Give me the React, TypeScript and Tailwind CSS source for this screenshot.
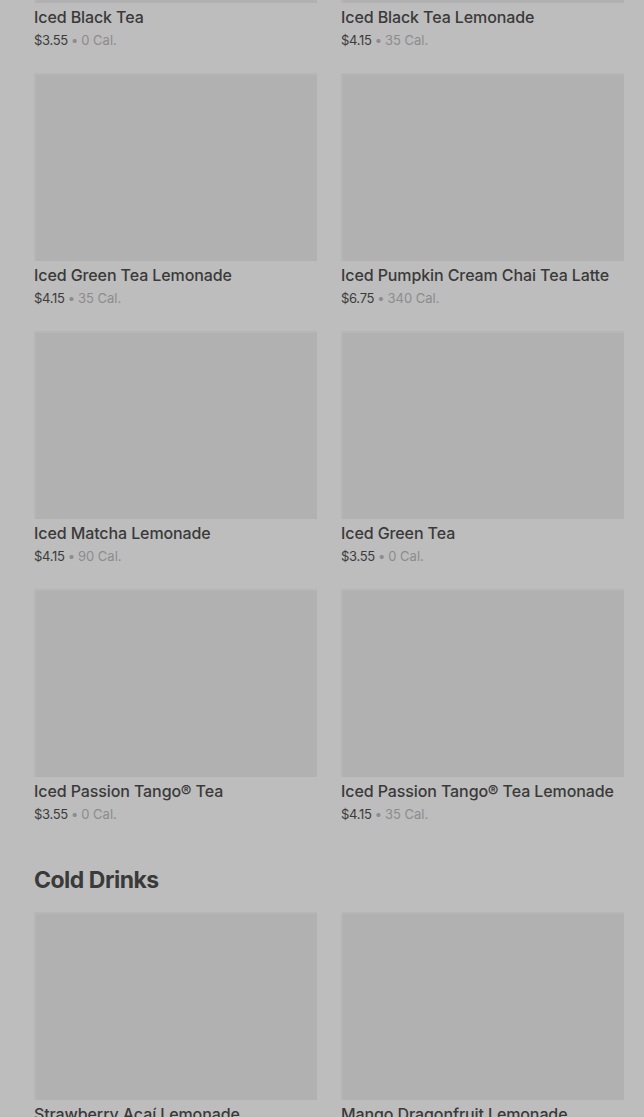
import React from 'react';

interface Drink {
    name: string;
    price: string;
    cal: string;
}

const icedTeas: Drink[] = [
    { name: 'Iced Black Tea', price: '$3.55', cal: '0 Cal.' },
    { name: 'Iced Black Tea Lemonade', price: '$4.15', cal: '35 Cal.' },
    { name: 'Iced Green Tea Lemonade', price: '$4.15', cal: '35 Cal.' },
    { name: 'Iced Pumpkin Cream Chai Tea Latte', price: '$6.75', cal: '340 Cal.' },
    { name: 'Iced Matcha Lemonade', price: '$4.15', cal: '90 Cal.' },
    { name: 'Iced Green Tea', price: '$3.55', cal: '0 Cal.' },
    { name: 'Iced Passion Tango® Tea', price: '$3.55', cal: '0 Cal.' },
    { name: 'Iced Passion Tango® Tea Lemonade', price: '$4.15', cal: '35 Cal.' },
];

const coldDrinks: Drink[] = [
    { name: 'Strawberry Açaí Lemonade', price: '$4.45', cal: '100 Cal.' },
    { name: 'Mango Dragonfruit Lemonade', price: '$4.45', cal: '140 Cal.' },
];

const DrinkCard: React.FC<{ drink: Drink }> = ({ drink }) => (
    <div className="flex flex-col">
        {/* 이미지 자리 (로딩 중) */}
        <div className="h-[188px] w-full bg-[#b1b1b1] border-t-2 border-l-2 border-[#b6b6b6]" />
        <p className="mt-[4px] text-[16px] leading-[20px] font-medium text-[#3a3a3a] whitespace-nowrap tracking-[-0.1px]">
            {drink.name}
        </p>
        <p className="mt-[5px] text-[13px] leading-[17px] text-[#8c8c8c]">
            <span className="text-[#3c3c3c] tracking-[-0.3px]">{drink.price}</span>
            <span className="mx-[3px]">•</span>
            {drink.cal}
        </p>
    </div>
);

const App: React.FC = () => {
    return (
        <div className="h-[1117px] w-full overflow-hidden bg-[#bdbdbd] font-['Inter','Liberation_Sans',sans-serif]">
            <div className="pl-[34px] pr-[20px] mt-[-185px]">
                <div className="grid grid-cols-2 gap-x-[24px] gap-y-[24px]">
                    {icedTeas.map((drink, i) => (
                        <DrinkCard key={i} drink={drink} />
                    ))}
                </div>

                <h2 className="mt-[42px] mb-[17px] text-[23px] leading-[30px] font-bold text-[#3a3a3a] tracking-[-0.5px]">
                    Cold Drinks
                </h2>

                <div className="grid grid-cols-2 gap-x-[24px] gap-y-[24px]">
                    {coldDrinks.map((drink, i) => (
                        <DrinkCard key={i} drink={drink} />
                    ))}
                </div>
            </div>
        </div>
    );
};

export default App;
